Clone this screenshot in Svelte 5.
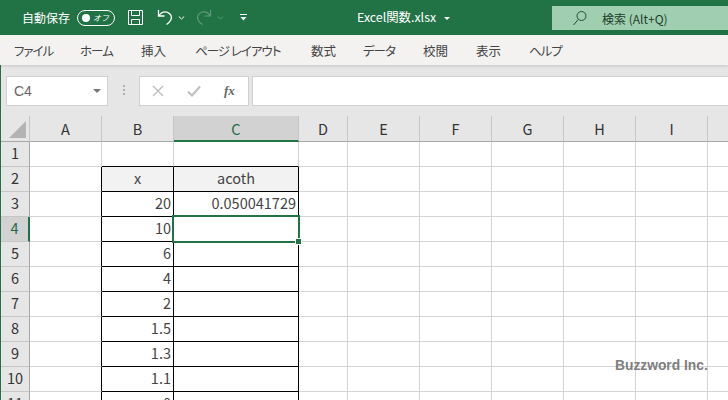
<script>
  // width = distance to the next tab's start
  const tabs = [
    { name: 'ファイル', width: 66 },
    { name: 'ホーム', width: 61 },
    { name: '挿入', width: 54, kanji: true },
    { name: 'ページ レイアウト', width: 116 },
    { name: '数式', width: 52, kanji: true },
    { name: 'データ', width: 60 },
    { name: '校閲', width: 53, kanji: true },
    { name: '表示', width: 53, kanji: true },
    { name: 'ヘルプ', width: 40 }
  ];
  const cols = ['A', 'B', 'C', 'D', 'E', 'F', 'G', 'H', 'I', 'J'];
  const values = { 3: ['20', '0.050041729'], 4: ['10', ''], 5: ['6', ''], 6: ['4', ''], 7: ['2', ''], 8: ['1.5', ''], 9: ['1.3', ''], 10: ['1.1', ''], 11: ['0', ''] };
  const rows = [1, 2, 3, 4, 5, 6, 7, 8, 9, 10, 11];

  function cellClass(r, c) {
    let cls = 'cell';
    const inTable = r >= 2 && (c === 'B' || c === 'C');
    if (inTable) cls += ' boxed';
    if (r === 1 && (c === 'B' || c === 'C')) cls += ' above';
    if (r >= 2 && c === 'A') cls += ' before';
    if (r === 2 && inTable) cls += ' head';
    if (inTable && r > 2) cls += ' num';
    return cls;
  }

  function cellText(r, c) {
    if (r === 2 && c === 'B') return 'x';
    if (r === 2 && c === 'C') return 'acoth';
    if (values[r] && c === 'B') return values[r][0];
    if (values[r] && c === 'C') return values[r][1];
    return '';
  }
</script>

<div class="window">
  <header class="titlebar">
    <span class="autosave">自動保存</span>
    <span class="toggle"><i></i><b>オフ</b></span>
    <svg class="save" width="17" height="17" viewBox="0 0 17 17" fill="none" stroke="#fff" stroke-width="1">
      <path d="M1.500 1.500h14v14h-14zM4.500 1.500v5h8v-5M4.500 15.500v-5h8v5" />
    </svg>
    <svg class="undo" width="17" height="17" viewBox="0 0 17 17" fill="none" stroke="#fff" stroke-width="1.300">
      <path d="M1.500 1v6h6M1.800 6.800C4 3.500 7.500 2.300 10.500 3.300c3.500 1.300 4.800 4.700 3.300 7.700-.8 1.600-2.300 3.200-4.300 4.500" />
    </svg>
    <svg class="caret" width="7" height="4" viewBox="0 0 7 4" fill="none" stroke="#fff"><path d="M.8.500 3.500 3 6.200.500" /></svg>
    <svg class="redo" width="17" height="17" viewBox="0 0 17 17" fill="none" stroke="#5d9a7c" stroke-width="1.200">
      <path d="M15.500 1v6h-6M15.200 6.800C13 3.500 9.500 2.300 6.500 3.300c-3.500 1.300-4.800 4.700-3.300 7.700.8 1.600 2.300 3.200 4.300 4.500" />
    </svg>
    <svg class="caret dim" width="7" height="4" viewBox="0 0 7 4" fill="none" stroke="#5d9a7c"><path d="M.8.500 3.500 3 6.200.500" /></svg>
    <svg class="more" width="7" height="7" viewBox="0 0 7 7" fill="#fff"><path d="M0 0h7v1H0zM.5 3h6L3.500 6.500z" /></svg>
    <span class="filename">Excel関数.xlsx</span>
    <span class="down"></span>
    <div class="search">
      <svg width="16" height="16" viewBox="0 0 16 16" fill="none" stroke="#1f4d36" stroke-width="1">
        <circle cx="9.500" cy="6" r="4.500" /><path d="M6.200 9.500 1.500 15" />
      </svg>
      <span>検索 (Alt+Q)</span>
    </div>
  </header>

  <nav class="tabs">
    {#each tabs as tab}
      <span class="tab" class:kanji={tab.kanji} style="width: {tab.width}px">{tab.name}</span>
    {/each}
  </nav>

  <section class="formula">
    <div class="namebox"><span>C4</span><i></i></div>
    <div class="dots"></div>
    <div class="buttons">
      <svg width="12" height="12" viewBox="0 0 12 12" stroke="#bdbdbd" stroke-width="1.400"><path d="M1 1l10 10M11 1 1 11" /></svg>
      <svg width="14" height="12" viewBox="0 0 14 12" fill="none" stroke="#bdbdbd" stroke-width="2"><path d="M1 6.500 5 10.500 13 1.500" /></svg>
      <span class="fx">fx</span>
    </div>
    <div class="input"></div>
  </section>

  <section class="sheet">
    <div class="corner"><i></i></div>
    {#each cols as c}
      <div class="colhead" class:active={c === 'C'}>{c}</div>
    {/each}
    {#each rows as r}
      <div class="rowhead" class:active={r === 4}>{r}</div>
      {#each cols as c}
        <div class={cellClass(r, c)}>
          {cellText(r, c)}
          {#if r === 4 && c === 'C'}<div class="selection"><i></i></div>{/if}
        </div>
      {/each}
    {/each}
    <div class="mark">Buzzword Inc.</div>
  </section>
</div>

<style>
  :global(body) {
    margin: 0;
    background: #fff;
  }

  .window {
    width: 728px;
    height: 400px;
    overflow: hidden;
    display: flex;
    flex-direction: column;
    font-family: "Noto Sans CJK JP", "Noto Sans", sans-serif;
  }

  .titlebar {
    height: 35px;
    flex: none;
    background: #217346;
    color: #fff;
    display: flex;
    align-items: center;
    position: relative;
    font-size: 12px;
  }

  .autosave {
    margin-left: 22px;
    width: 48px;
    white-space: nowrap;
  }

  .toggle {
    margin-left: 7px;
    width: 38px;
    height: 16px;
    box-sizing: border-box;
    border: 1px solid #fff;
    border-radius: 8px;
    display: flex;
    align-items: center;
    justify-content: space-between;
    padding: 0 5px 0 4px;
  }

  .toggle i {
    width: 8px;
    height: 8px;
    border-radius: 50%;
    background: #fff;
  }

  .toggle b {
    font-weight: 400;
    font-size: 8px;
    line-height: 1;
    font-style: italic;
  }

  .save { margin-left: 12px; }
  .undo { margin-left: 13px; }
  .caret { margin-left: 4px; }
  .redo { margin-left: 10px; }
  .caret.dim { margin-left: 5px; }
  .more { margin-left: 16px; }

  .filename {
    position: absolute;
    left: 357px;
    top: 8px;
    line-height: 18px;
    font-size: 12.400px;
    white-space: nowrap;
  }

  .down {
    position: absolute;
    left: 444px;
    top: 17px;
    border: 3px solid transparent;
    border-top: 3px solid #fff;
    border-bottom: 0;
  }

  .search {
    position: absolute;
    left: 552px;
    top: 6px;
    width: 176px;
    height: 24px;
    background: #9fcfb0;
    color: #1f3d2c;
    display: flex;
    align-items: center;
    font-size: 12px;
  }

  .search svg { margin-left: 20px; }
  .search span { margin-left: 14px; }

  .tabs {
    height: 30px;
    flex: none;
    background: #f3f2f1;
    display: flex;
    align-items: center;
    padding-left: 14px;
    font-size: 12.500px;
    font-feature-settings: "palt";
    color: #444;
    box-shadow: 0 1px 3px rgba(0, 0, 0, 0.15);
    position: relative;
    z-index: 1;
  }

  .tab {
    flex: none;
    white-space: nowrap;
    letter-spacing: -1px;
  }

  .tab.kanji { letter-spacing: 0; }

  .formula {
    height: 51px;
    flex: none;
    background: #e6e6e6;
    display: flex;
    padding: 11px 0 0 5px;
    box-sizing: border-box;
    border-left: 1px solid #217346;
  }

  .namebox, .buttons, .input {
    height: 30px;
    box-sizing: border-box;
    background: #fff;
    border: 1px solid #d0d0d0;
  }

  .namebox {
    width: 102px;
    display: flex;
    align-items: center;
    justify-content: space-between;
    padding: 0 6px 0 7px;
    font-family: "Liberation Sans", sans-serif;
    font-size: 14px;
    color: #666;
  }

  .namebox i {
    border: 4px solid transparent;
    border-top: 4px solid #777;
    border-bottom: 0;
  }

  .dots {
    width: 2px;
    height: 11px;
    margin: 9px 14px 0 15px;
    background: repeating-linear-gradient(#b0b0b0 0 2px, transparent 2px 4px);
  }

  .buttons {
    width: 110px;
    display: flex;
    align-items: center;
    padding-left: 12px;
    gap: 23px;
  }

  .fx {
    font-family: "Liberation Serif", serif;
    font-style: italic;
    font-weight: 700;
    font-size: 13px;
    color: #666;
  }

  .input {
    flex: 1;
    margin-left: 3px;
    border-right: 0;
  }

  .sheet {
    flex: 1;
    position: relative;
    display: grid;
    grid-template-columns: 29px 72px 72px 125px 49px 72px 72px 72px 72px 72px 72px;
    grid-template-rows: 26px repeat(11, 25px);
    font-size: 14.500px;
    color: #444;
    border-left: 1px solid #217346;
    width: 800px;
    background: #fff;
    box-sizing: border-box;
  }

  .corner {
    background: #e6e6e6;
    border-right: 1px solid #c6c6c6;
    border-bottom: 1px solid #a8a8a8;
    display: flex;
    align-items: flex-end;
    justify-content: flex-end;
    padding: 0 3px 3px 0;
    box-sizing: border-box;
  }

  .corner i {
    width: 0;
    height: 0;
    border-style: solid;
    border-width: 0 0 17px 17px;
    border-color: transparent transparent #b4b4b4 transparent;
  }

  .colhead {
    background: #e6e6e6;
    border-right: 1px solid #c6c6c6;
    border-bottom: 1px solid #a8a8a8;
    display: flex;
    align-items: center;
    justify-content: center;
    box-sizing: border-box;
    color: #333;
  }

  .colhead.active {
    background: #d2d2d2;
    color: #1f6b43;
    border-bottom: 2px solid #217346;
  }

  .rowhead {
    background: #e6e6e6;
    border-right: 1px solid #a8a8a8;
    border-bottom: 1px solid #c6c6c6;
    display: flex;
    align-items: center;
    justify-content: center;
    padding-bottom: 4px;
    box-sizing: border-box;
    color: #333;
  }

  .rowhead.active {
    background: #d2d2d2;
    color: #1f6b43;
    border-right: 2px solid #217346;
  }

  .cell {
    border-right: 1px solid #d4d4d4;
    border-bottom: 1px solid #d4d4d4;
    box-sizing: border-box;
    position: relative;
    display: flex;
    align-items: center;
    padding: 0 2px 4px;
    white-space: nowrap;
  }

  .cell.boxed {
    border-right-color: #000;
    border-bottom-color: #000;
  }

  .cell.above { border-bottom-color: #000; }
  .cell.before { border-right-color: #000; }

  .cell.head {
    background: #f2f2f2;
    justify-content: center;
  }

  .cell.num { justify-content: flex-end; }

  .selection {
    position: absolute;
    left: -2px;
    top: -2px;
    right: -2px;
    bottom: -2px;
    border: 2px solid #217346;
    z-index: 2;
  }

  .selection i {
    position: absolute;
    right: -4px;
    bottom: -4px;
    width: 5px;
    height: 5px;
    background: #217346;
    border: 1px solid #fff;
    box-sizing: content-box;
  }

  .mark {
    position: absolute;
    left: 614px;
    top: 242px;
    font-family: "Liberation Sans", sans-serif;
    font-weight: 700;
    font-size: 13.800px;
    line-height: 16px;
    color: rgba(110, 110, 110, 0.9);
    white-space: nowrap;
  }
</style>
